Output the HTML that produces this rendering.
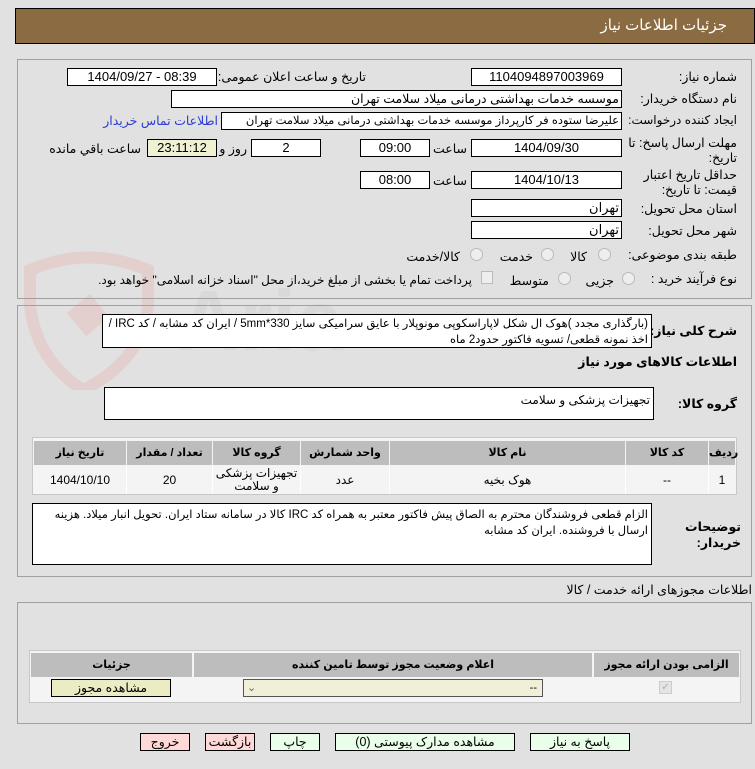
<!DOCTYPE html>
<html><head><meta charset="utf-8"><style>
*{box-sizing:border-box}
body{margin:0;width:755px;height:769px;background:#e1e1e1;font-family:"Liberation Sans","DejaVu Sans",sans-serif;font-size:12px;color:#000;position:relative;overflow:hidden}
.a{position:absolute}
.box{position:absolute;background:#fff;border:1px solid #000;height:18px;line-height:16px;text-align:center;font-size:13px;overflow:hidden;white-space:nowrap}
.l{position:absolute;white-space:nowrap;direction:rtl;font-size:12.5px}
.panel{position:absolute;border:1px solid #a0a0a0;left:17px;width:735px}
.ta{position:absolute;background:#fff;border:1px solid #000;direction:rtl;text-align:right;padding:1px 3px;font-size:12px;line-height:16px}
.th{position:absolute;background:#bdbdbd;font-weight:bold;text-align:center;font-size:11px;line-height:24px}
.td{position:absolute;background:#f4f4f4;text-align:center;font-size:12px}
.btn{position:absolute;border:1px solid #000;height:18px;line-height:16px;text-align:center;font-size:12.5px;background:#eaffea}
.radio{position:absolute;width:13px;height:13px;border-radius:50%;border:1px solid #bbb;background:#eee}
</style></head><body>
<svg class="a" style="left:18px;top:250px;opacity:.6" width="330" height="140" viewBox="0 0 330 140">
<path d="M12 20 Q70 -5 130 20 L130 55 Q125 110 65 140 Q18 110 12 55 Z" fill="none" stroke="#e6c4c4" stroke-width="12"/>
<rect x="55" y="50" width="30" height="30" fill="#e6c4c4" transform="rotate(-40 70 65)"/>
<text x="160" y="100" font-family="Liberation Sans" font-size="85" font-weight="bold" fill="#d4d4d4">Aria</text>
</svg>
<div class="a" style="left:15px;top:8px;width:740px;height:36px;background:#8b6b42;border:1px solid #000"></div>
<div class="l" style="right:28px;top:16px;color:#fff;font-size:15px">جزئیات اطلاعات نیاز</div>

<div class="panel" style="top:59px;height:240px"></div>
<div class="panel" style="top:305px;height:272px"></div>

<div class="l" style="right:18px;top:69px">شماره نیاز:</div>
<div class="box" style="left:471px;top:68px;width:151px">1104094897003969</div>
<div class="l" style="right:389px;top:69px">تاریخ و ساعت اعلان عمومی:</div>
<div class="box" style="left:67px;top:68px;width:150px">1404/09/27 - 08:39</div>

<div class="l" style="right:18px;top:91px">نام دستگاه خریدار:</div>
<div class="box" style="left:171px;top:90px;width:451px;text-align:right;direction:rtl;padding-right:2px;font-size:12.5px">موسسه خدمات بهداشتی درمانی میلاد سلامت تهران</div>

<div class="l" style="right:18px;top:113px;font-size:12px">ایجاد کننده درخواست:</div>
<div class="box" style="left:221px;top:112px;width:401px;text-align:right;direction:rtl;padding-right:2px;font-size:11.5px">علیرضا ستوده فر کارپرداز موسسه خدمات بهداشتی درمانی میلاد سلامت تهران</div>
<div class="l" style="right:537px;top:113px;color:#2a3cd6">اطلاعات تماس خریدار</div>

<div class="l" style="right:18px;top:135px">مهلت ارسال پاسخ: تا</div>
<div class="l" style="right:18px;top:150px">تاریخ:</div>
<div class="box" style="left:471px;top:139px;width:151px">1404/09/30</div>
<div class="l" style="right:288px;top:141px">ساعت</div>
<div class="box" style="left:360px;top:139px;width:70px">09:00</div>
<div class="box" style="left:251px;top:139px;width:70px">2</div>
<div class="l" style="right:508px;top:141px">روز و</div>
<div class="box" style="left:147px;top:139px;width:70px;background:#f0f0d2">23:11:12</div>
<div class="l" style="right:614px;top:141px">ساعت باقي مانده</div>

<div class="l" style="right:18px;top:167px">حداقل تاریخ اعتبار</div>
<div class="l" style="right:18px;top:182px">قیمت: تا تاریخ:</div>
<div class="box" style="left:471px;top:171px;width:151px">1404/10/13</div>
<div class="l" style="right:288px;top:173px">ساعت</div>
<div class="box" style="left:360px;top:171px;width:70px">08:00</div>

<div class="l" style="right:18px;top:201px">استان محل تحویل:</div>
<div class="box" style="left:471px;top:199px;width:151px;text-align:right;direction:rtl;padding-right:2px">تهران</div>
<div class="l" style="right:18px;top:223px">شهر محل تحویل:</div>
<div class="box" style="left:471px;top:221px;width:151px;text-align:right;direction:rtl;padding-right:2px">تهران</div>

<div class="l" style="right:18px;top:247px">طبقه بندی موضوعی:</div>
<div class="radio" style="left:598px;top:248px"></div><div class="l" style="right:168px;top:249px">کالا</div>
<div class="radio" style="left:541px;top:248px"></div><div class="l" style="right:222px;top:249px">خدمت</div>
<div class="radio" style="left:470px;top:248px"></div><div class="l" style="right:295px;top:249px">کالا/خدمت</div>

<div class="l" style="right:18px;top:271px">نوع فرآیند خرید :</div>
<div class="radio" style="left:622px;top:272px"></div><div class="l" style="right:141px;top:273px">جزیی</div>
<div class="radio" style="left:558px;top:272px"></div><div class="l" style="right:206px;top:273px">متوسط</div>
<div class="a" style="left:481px;top:271px;width:12px;height:13px;border:1px solid #bbb;background:#eee"></div>
<div class="l" style="right:283px;top:273px;font-size:12px">پرداخت تمام یا بخشی از مبلغ خرید،از محل "اسناد خزانه اسلامی" خواهد بود.</div>

<div class="l" style="right:18px;top:323px;font-weight:bold">شرح کلی نیاز:</div>
<div class="ta" style="left:102px;top:314px;width:550px;height:34px;font-size:11.5px">(بارگذاری مجدد )هوک ال شکل لاپاراسکوپی مونوپلار با عایق سرامیکی سایز 330*5mm / ایران کد مشابه / کد IRC / اخذ نمونه قطعی/ تسویه فاکتور حدود2 ماه</div>
<div class="l" style="right:18px;top:354px;font-weight:bold">اطلاعات کالاهای مورد نیاز</div>
<div class="l" style="right:18px;top:396px;font-weight:bold">گروه کالا:</div>
<div class="ta" style="left:104px;top:387px;width:550px;height:33px;padding-top:4px">تجهیزات پزشکی و سلامت</div>

<div class="a" style="left:32px;top:437px;width:705px;height:58px;border:1px solid #c8c8c8;background:#f4f4f4"></div>
<div class="th" style="left:709px;top:441px;width:26px">ردیف</div>
<div class="th" style="left:626px;top:441px;width:82px">کد کالا</div>
<div class="th" style="left:390px;top:441px;width:235px">نام کالا</div>
<div class="th" style="left:301px;top:441px;width:88px">واحد شمارش</div>
<div class="th" style="left:213px;top:441px;width:87px">گروه کالا</div>
<div class="th" style="left:127px;top:441px;width:85px">تعداد / مقدار</div>
<div class="th" style="left:34px;top:441px;width:92px">تاریخ نیاز</div>
<div class="a" style="left:34px;top:466px;width:701px;height:28px;background:#fff"></div>
<div class="td" style="left:709px;top:466px;width:26px;line-height:28px">1</div>
<div class="td" style="left:626px;top:466px;width:82px;line-height:28px">--</div>
<div class="td" style="left:390px;top:466px;width:235px;line-height:28px">هوک بخیه</div>
<div class="td" style="left:301px;top:466px;width:88px;line-height:28px">عدد</div>
<div class="td" style="left:213px;top:466px;width:87px;height:28px;line-height:13px;padding-top:1px">تجهیزات پزشکی و سلامت</div>
<div class="td" style="left:127px;top:466px;width:85px;line-height:28px">20</div>
<div class="td" style="left:34px;top:466px;width:92px;line-height:28px">1404/10/10</div>

<div class="l" style="right:14px;top:519px;font-weight:bold">توضیحات</div>
<div class="l" style="right:14px;top:535px;font-weight:bold">خریدار:</div>
<div class="ta" style="left:32px;top:503px;width:620px;height:62px;padding-top:3px;font-size:11.5px">الزام قطعی فروشندگان محترم به الصاق پیش فاکتور معتبر به همراه کد IRC کالا در سامانه ستاد ایران. تحویل انبار میلاد. هزینه ارسال با فروشنده. ایران کد مشابه</div>

<div class="l" style="right:3px;top:582px">اطلاعات مجوزهای ارائه خدمت / کالا</div>
<div class="panel" style="top:602px;height:122px"></div>
<div class="a" style="left:29px;top:650px;width:712px;height:53px;border:1px solid #c8c8c8;background:#f4f4f4"></div>
<div class="th" style="left:594px;top:653px;width:145px">الزامی بودن ارائه مجوز</div>
<div class="th" style="left:194px;top:653px;width:398px">اعلام وضعیت مجوز توسط تامین کننده</div>
<div class="th" style="left:31px;top:653px;width:161px">جزئیات</div>
<div class="a" style="left:659px;top:681px;width:13px;height:13px;border:1px solid #ccc;background:#e4e4e4;color:#aaa;font-size:10px;line-height:11px;text-align:center">✓</div>
<div class="a" style="left:243px;top:679px;width:300px;height:18px;border:1px solid #555;background:#f0f0d8;font-size:11px;line-height:16px"><span style="position:absolute;left:3px;color:#666">⌄</span><span style="position:absolute;right:5px">--</span></div>
<div class="btn" style="left:51px;top:679px;width:120px;background:#ececc4">مشاهده مجوز</div>

<div class="btn" style="left:530px;top:733px;width:100px">پاسخ به نیاز</div>
<div class="btn" style="left:335px;top:733px;width:180px">مشاهده مدارک پیوستی (0)</div>
<div class="btn" style="left:270px;top:733px;width:50px">چاپ</div>
<div class="btn" style="left:205px;top:733px;width:50px;background:#ffd8d8">بازگشت</div>
<div class="btn" style="left:140px;top:733px;width:50px;background:#ffd8d8">خروج</div>
</body></html>
